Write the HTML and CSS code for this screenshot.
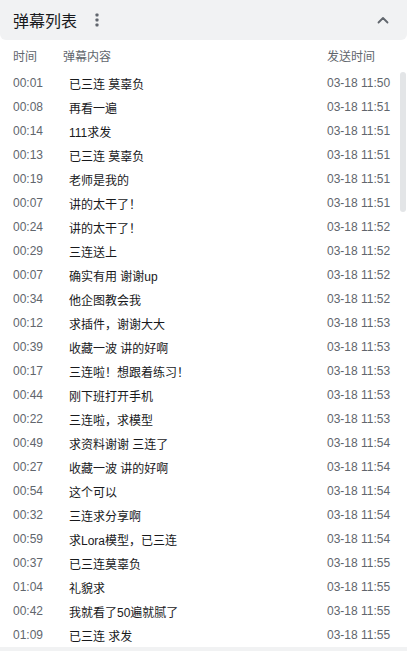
FILE: index.html
```html
<!DOCTYPE html>
<html lang="zh">
<head>
    <meta charset="UTF-8">
    <title>弹幕列表</title>
    <link rel="stylesheet" href="styles.css">
</head>
<body>

<div class="panel">
    <div class="panel-head">
        <span class="panel-title">弹幕列表</span>
        <svg class="more" width="4" height="14" viewBox="0 0 4 14">
            <rect x="0.5" y="0.5" width="3" height="3" rx="0.8" fill="#61666d"/>
            <rect x="0.5" y="5.5" width="3" height="3" rx="0.8" fill="#61666d"/>
            <rect x="0.5" y="10.5" width="3" height="3" rx="0.8" fill="#61666d"/>
        </svg>
        <svg class="fold" width="12" height="8" viewBox="0 0 12 8">
            <path d="M1.5 6.5 L6 2 L10.5 6.5" fill="none" stroke="#61666d" stroke-width="1.8" stroke-linecap="round" stroke-linejoin="round"/>
        </svg>
    </div>

    <div class="cols">
        <span class="c-time">时间</span>
        <span class="c-text">弹幕内容</span>
        <span class="c-date">发送时间</span>
    </div>

    <div class="list">
        <div class="row"><span class="c-time">00:01</span><span class="c-text">已三连 莫辜负</span><span class="c-date">03-18 11:50</span></div>
        <div class="row"><span class="c-time">00:08</span><span class="c-text">再看一遍</span><span class="c-date">03-18 11:51</span></div>
        <div class="row"><span class="c-time">00:14</span><span class="c-text">111求发</span><span class="c-date">03-18 11:51</span></div>
        <div class="row"><span class="c-time">00:13</span><span class="c-text">已三连 莫辜负</span><span class="c-date">03-18 11:51</span></div>
        <div class="row"><span class="c-time">00:19</span><span class="c-text">老师是我的</span><span class="c-date">03-18 11:51</span></div>
        <div class="row"><span class="c-time">00:07</span><span class="c-text">讲的太干了！</span><span class="c-date">03-18 11:51</span></div>
        <div class="row"><span class="c-time">00:24</span><span class="c-text">讲的太干了！</span><span class="c-date">03-18 11:52</span></div>
        <div class="row"><span class="c-time">00:29</span><span class="c-text">三连送上</span><span class="c-date">03-18 11:52</span></div>
        <div class="row"><span class="c-time">00:07</span><span class="c-text">确实有用 谢谢up</span><span class="c-date">03-18 11:52</span></div>
        <div class="row"><span class="c-time">00:34</span><span class="c-text">他企图教会我</span><span class="c-date">03-18 11:52</span></div>
        <div class="row"><span class="c-time">00:12</span><span class="c-text">求插件，谢谢大大</span><span class="c-date">03-18 11:53</span></div>
        <div class="row"><span class="c-time">00:39</span><span class="c-text">收藏一波 讲的好啊</span><span class="c-date">03-18 11:53</span></div>
        <div class="row"><span class="c-time">00:17</span><span class="c-text">三连啦！想跟着练习！</span><span class="c-date">03-18 11:53</span></div>
        <div class="row"><span class="c-time">00:44</span><span class="c-text">刚下班打开手机</span><span class="c-date">03-18 11:53</span></div>
        <div class="row"><span class="c-time">00:22</span><span class="c-text">三连啦，求模型</span><span class="c-date">03-18 11:53</span></div>
        <div class="row"><span class="c-time">00:49</span><span class="c-text">求资料谢谢 三连了</span><span class="c-date">03-18 11:54</span></div>
        <div class="row"><span class="c-time">00:27</span><span class="c-text">收藏一波 讲的好啊</span><span class="c-date">03-18 11:54</span></div>
        <div class="row"><span class="c-time">00:54</span><span class="c-text">这个可以</span><span class="c-date">03-18 11:54</span></div>
        <div class="row"><span class="c-time">00:32</span><span class="c-text">三连求分享啊</span><span class="c-date">03-18 11:54</span></div>
        <div class="row"><span class="c-time">00:59</span><span class="c-text">求Lora模型，已三连</span><span class="c-date">03-18 11:54</span></div>
        <div class="row"><span class="c-time">00:37</span><span class="c-text">已三连莫辜负</span><span class="c-date">03-18 11:55</span></div>
        <div class="row"><span class="c-time">01:04</span><span class="c-text">礼貌求</span><span class="c-date">03-18 11:55</span></div>
        <div class="row"><span class="c-time">00:42</span><span class="c-text">我就看了50遍就腻了</span><span class="c-date">03-18 11:55</span></div>
        <div class="row"><span class="c-time">01:09</span><span class="c-text">已三连 求发</span><span class="c-date">03-18 11:55</span></div>
        <div class="thumb"></div>
    </div>
    <div class="panel-foot"></div>
</div>

</body>
</html>
```

FILE: styles.css
```css
body {
    margin: 0;
    font-family: "Liberation Sans", "Noto Sans CJK SC", sans-serif;
    background: #fff;
}
.panel {
    width: 407px;
    height: 651px;
    overflow: hidden;
}
.panel-head {
    height: 40px;
    display: flex;
    align-items: center;
    padding: 0 18px 0 13px;
    background: #f1f2f3;
    border-radius: 0 0 6px 6px;
}
.panel-title {
    font-size: 16px;
    color: #18191c;
}
.more {
    margin-left: 18px;
}
.fold {
    margin-left: auto;
    margin-right: 0;
}
.cols, .row {
    display: flex;
    align-items: center;
    padding: 0 18px 0 13px;
    font-size: 12px;
    color: #61666d;
}
.cols {
    height: 31px;
}
.c-time {
    width: 50px;
}
.c-text {
    flex: 1;
}
.c-date {
    width: 62px;
    white-space: nowrap;
}
.list {
    position: relative;
    height: 576px;
}
.row {
    height: 24px;
}
.row .c-text {
    padding-left: 6px;
    color: #18191c;
}
.thumb {
    position: absolute;
    right: 1px;
    top: 1px;
    width: 6px;
    height: 140px;
    border-radius: 3px;
    background: #e3e5e7;
}
.panel-foot {
    height: 4px;
    background: #f1f2f3;
}
```
